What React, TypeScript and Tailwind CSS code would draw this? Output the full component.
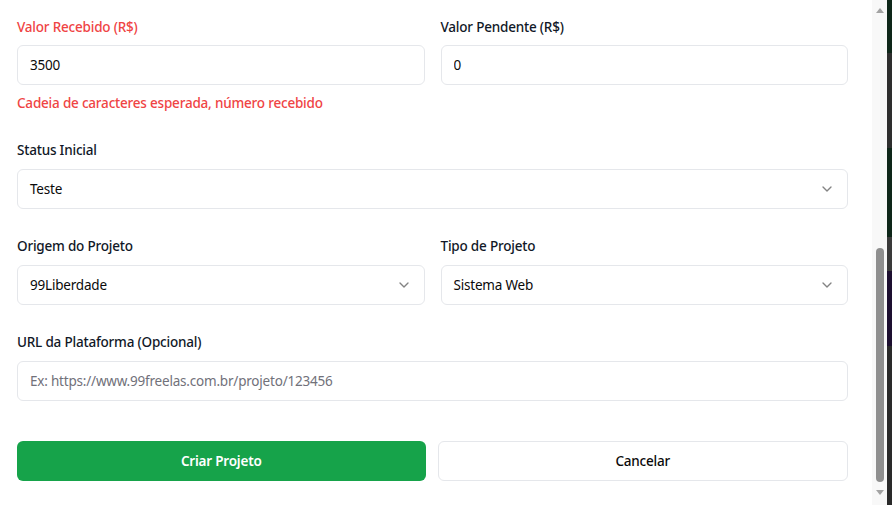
import { ChevronDown } from "lucide-react";

const font = { fontFamily: '"Noto Sans", "Open Sans", sans-serif' };

function Field({
  label,
  children,
  error,
  invalid,
  tight,
}: {
  label: string;
  children: React.ReactNode;
  error?: string;
  invalid?: boolean;
  tight?: boolean;
}) {
  return (
    <div className={`flex flex-col ${tight ? "gap-2" : "gap-[9px]"}`}>
      <label className={`text-[13.5px] font-medium leading-5 tracking-[-0.2px] ${invalid ? "text-[#ef4444]" : "text-[#111827]"}`}>
        {label}
      </label>
      {children}
      {error && <p className="text-[13.5px] font-medium leading-5 tracking-[-0.2px] text-[#ef4444]">{error}</p>}
    </div>
  );
}

function TextInput({ value, placeholder }: { value?: string; placeholder?: string }) {
  return (
    <input
      readOnly
      value={value}
      placeholder={placeholder}
      className="h-10 w-full rounded-md border border-[#e5e7eb] bg-white px-3 text-[13.5px] tracking-[-0.2px] text-[#0a0a0a] placeholder:text-[#71717a] outline-none"
    />
  );
}

function SelectBox({ value }: { value: string }) {
  return (
    <button className="flex h-10 w-full items-center justify-between rounded-md border border-[#e5e7eb] bg-white px-3 text-[13.5px] tracking-[-0.2px] text-[#0a0a0a]">
      <span>{value}</span>
      <ChevronDown className="h-4 w-4 opacity-50" />
    </button>
  );
}

function Scrollbar() {
  return (
    <div className="flex w-[15px] shrink-0 flex-col items-center bg-[#f8f8f8]">
      <div className="mt-[8px] h-0 w-0 border-x-[4px] border-b-[5px] border-x-transparent border-b-[#a3a3a3]" />
      <div className="mt-[235px] h-[234px] w-[8px] rounded-full bg-[#8f8f8f]" />
      <div className="mt-[8px] h-0 w-0 border-x-[4px] border-t-[5px] border-x-transparent border-t-[#a3a3a3]" />
    </div>
  );
}

function Backdrop() {
  return (
    <div className="flex w-[5px] shrink-0 flex-col">
      <div className="h-[53px] bg-[#0e2619]" />
      <div className="h-[95px] bg-[#2e2e2e]" />
      <div className="h-[89px] bg-[#0e2619]" />
      <div className="h-[34px] bg-[#3a3a3a]" />
      <div className="h-[75px] bg-[#1d0f30]" />
      <div className="flex-1 bg-[#2a2a2a]" />
    </div>
  );
}

export default function App() {
  return (
    <div className="flex h-[505px] w-[892px] overflow-hidden bg-white" style={font}>
      <div className="flex-1 pl-[17px] pr-[24px] pt-[17px]">
        <div className="flex flex-col gap-[27px]">
          <div className="grid grid-cols-2 gap-4">
            <Field label="Valor Recebido (R$)" invalid tight error="Cadeia de caracteres esperada, número recebido">
              <TextInput value="3500" />
            </Field>
            <Field label="Valor Pendente (R$)" tight>
              <TextInput value="0" />
            </Field>
          </div>
          <Field label="Status Inicial">
            <SelectBox value="Teste" />
          </Field>
          <div className="grid grid-cols-2 gap-4">
            <Field label="Origem do Projeto">
              <SelectBox value="99Liberdade" />
            </Field>
            <Field label="Tipo de Projeto">
              <SelectBox value="Sistema Web" />
            </Field>
          </div>
          <Field label="URL da Plataforma (Opcional)">
            <TextInput placeholder="Ex: https://www.99freelas.com.br/projeto/123456" />
          </Field>
        </div>
        <div className="mt-10 flex gap-3">
          <button className="h-10 flex-1 rounded-md bg-[#16a34a] text-[13.5px] font-semibold tracking-[-0.2px] text-white">
            Criar Projeto
          </button>
          <button className="h-10 flex-1 rounded-md border border-[#e5e7eb] bg-white text-[13.5px] font-medium tracking-[-0.2px] text-[#0a0a0a]">
            Cancelar
          </button>
        </div>
      </div>
      <Scrollbar />
      <Backdrop />
    </div>
  );
}
